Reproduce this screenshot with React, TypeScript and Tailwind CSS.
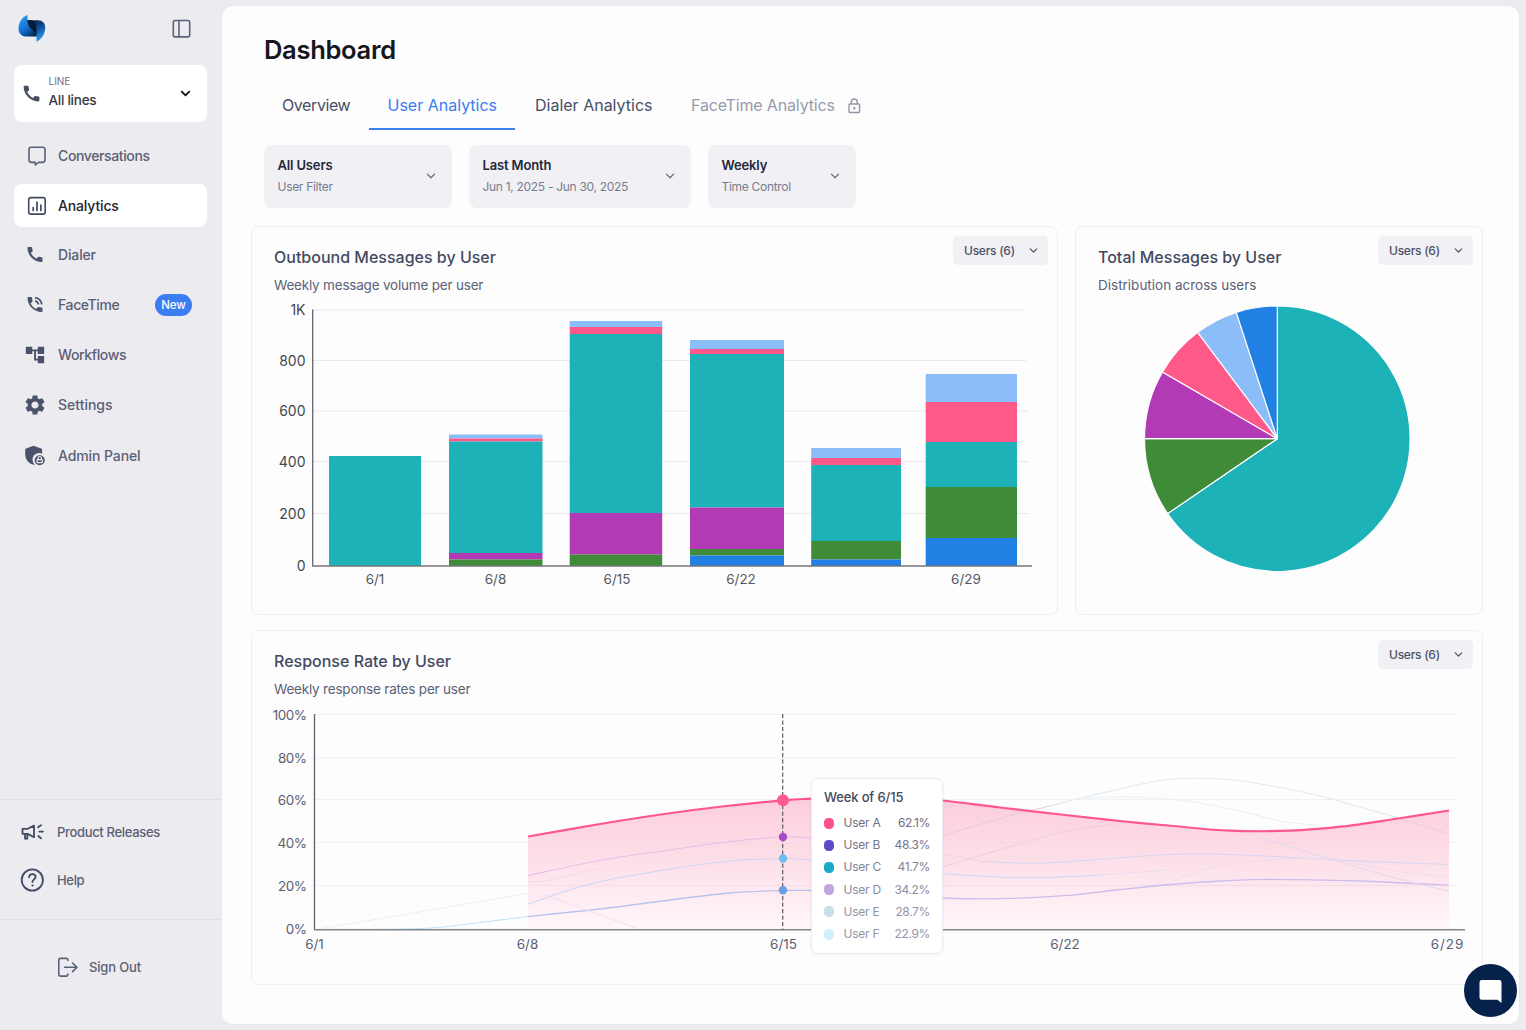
import React from 'react';
import { MdAccountTree, MdCall, MdPhoneInTalk, MdSettings } from 'react-icons/md';
import { ChevronDown } from 'lucide-react';

type Point = [number, number];

const COLORS = {
  teal: '#1cb2b8',
  green: '#3f8b37',
  purple: '#b33ab5',
  pink: '#ff5989',
  sky: '#8bbdf8',
  blue: '#2180e3',
};

// Each segment is [color, top edge]; it runs down to the next one or to the axis.
const BASELINE = 566;
const BARS: { x: number; w: number; label?: string; labelX?: number; segments: [string, number][] }[] = [
  { x: 329, w: 92, label: '6/1', labelX: 375, segments: [[COLORS.teal, 456]] },
  {
    x: 449, w: 93.5, label: '6/8', labelX: 495.5,
    segments: [[COLORS.sky, 434.5], [COLORS.pink, 438.5], [COLORS.teal, 441.5], [COLORS.purple, 553], [COLORS.green, 559.5]],
  },
  {
    x: 569.7, w: 92.5, label: '6/15', labelX: 617,
    segments: [[COLORS.sky, 321], [COLORS.pink, 327], [COLORS.teal, 334], [COLORS.purple, 513], [COLORS.green, 554.5]],
  },
  {
    x: 690, w: 94, label: '6/22', labelX: 741,
    segments: [[COLORS.sky, 340], [COLORS.pink, 349], [COLORS.teal, 354], [COLORS.purple, 507.5], [COLORS.green, 549], [COLORS.blue, 555.5]],
  },
  {
    x: 811.2, w: 89.8,
    segments: [[COLORS.sky, 448], [COLORS.pink, 458], [COLORS.teal, 465], [COLORS.green, 541], [COLORS.blue, 559.5]],
  },
  {
    x: 925.7, w: 91.3, label: '6/29', labelX: 966,
    segments: [[COLORS.sky, 374], [COLORS.pink, 402], [COLORS.teal, 442], [COLORS.green, 487], [COLORS.blue, 538]],
  },
];

const BAR_TICKS: [string, number, number][] = [
  ['1K', 310, 1024],
  ['800', 360.5, 1026],
  ['600', 411, 1028],
  ['400', 461.5, 1028],
  ['200', 513.5, 1029],
];

const SLICES: [string, number, number][] = [
  [COLORS.teal, 0, 235.66],
  [COLORS.green, 235.66, 270],
  [COLORS.purple, 270, 300.2],
  [COLORS.pink, 300.2, 323.2],
  [COLORS.sky, 323.2, 342],
  [COLORS.blue, 342, 360],
];

const RATE_TICKS: [string, number][] = [
  ['100%', 714.5],
  ['80%', 758],
  ['60%', 799.5],
  ['40%', 842.5],
  ['20%', 885.5],
  ['0%', 929],
];

const USER_A: Point[] = [[528, 836.5], [600, 824], [661, 814.5], [722, 806.5], [783, 800.3], [811, 798.7], [860, 797], [905, 797.5], [942, 800.5], [1000, 807.5], [1065, 815], [1120, 821], [1173, 826], [1230, 830.7], [1290, 830.7], [1341, 826.7], [1395, 819], [1449, 810.5]];

const RATE_LINES: { color: string; width?: number; points: Point[] }[] = [
  { color: '#e9f1ec', points: [[322, 928.5], [528, 893.5]] },
  { color: '#e8bfe6', points: [[528, 875.5], [602, 860], [670, 850], [730, 841.5], [783, 837], [811, 838], [870, 843]] },
  { color: '#cdd7f2', points: [[528, 904], [590, 884], [670, 869], [730, 861], [783, 858.5], [811, 860], [870, 867], [942, 873.7], [1025, 877.7], [1100, 875]] },
  { color: '#e8dcef', points: [[1100, 875], [1170, 870]] },
  { color: '#bfe6f4', points: [[370, 929.5], [430, 928], [480, 922.5], [528, 916.5]] },
  { color: '#b9c3ee', width: 1.3, points: [[528, 916.5], [600, 909], [670, 900], [730, 893], [783, 890.5], [811, 890.5]] },
  { color: '#cdbdec', width: 1.3, points: [[811, 890.5], [870, 893.5], [942, 898], [1000, 898.7], [1065, 895.6], [1120, 889.5], [1170, 884.5], [1220, 881], [1270, 879.3], [1360, 881], [1449, 885.3]] },
  { color: '#dfecea', points: [[1050, 806], [1100, 793.5], [1168, 779.5], [1228, 779.5], [1280, 787.5], [1320, 796], [1395, 817]] },
  { color: '#e8cbd8', points: [[942, 836], [1000, 818.5], [1050, 806]] },
  { color: '#e6cfd9', points: [[1395, 817], [1449, 834]] },
  { color: '#ead2dc', points: [[942, 867], [1040, 838], [1080, 829], [1115, 824]] },
  { color: '#e4f1f8', points: [[1085, 798], [1125, 797], [1180, 800], [1240, 811], [1280, 821], [1320, 825.5]] },
  { color: '#e2d9ee', points: [[1250, 834], [1320, 856], [1395, 878], [1449, 891]] },
  { color: '#f0d3e4', points: [[942, 853.5], [980, 861]] },
  { color: '#d6d6f0', points: [[980, 861], [1025, 863.3], [1065, 862], [1168, 854.5], [1230, 854.5], [1320, 859], [1380, 862], [1449, 864.5]] },
  { color: '#efdcec', points: [[1172, 881], [1210, 868], [1250, 861.5], [1320, 859], [1395, 871], [1449, 877]] },
  { color: '#f8d8e5', points: [[528, 882], [550, 880], [600, 868]] },
  { color: '#f2e0ef', points: [[545, 895], [600, 915], [636, 928]] },
];

const TOOLTIP_ROWS = [
  { name: 'User A', value: '62.1%', dot: 'bg-[#fd5188]', text: 'text-[#6d7085]' },
  { name: 'User B', value: '48.3%', dot: 'bg-[#5b4bc4]', text: 'text-[#73768a]' },
  { name: 'User C', value: '41.7%', dot: 'bg-[#1ba9c9]', text: 'text-[#818497]' },
  { name: 'User D', value: '34.2%', dot: 'bg-[#c0a5e2]', text: 'text-[#8a8d9f]' },
  { name: 'User E', value: '28.7%', dot: 'bg-[#c8dfea]', text: 'text-[#9295a6]' },
  { name: 'User F', value: '22.9%', dot: 'bg-[#d0effd]', text: 'text-[#9295a6]' },
];

const smooth = (pts: Point[]) => {
  let d = `M${pts[0][0]} ${pts[0][1]}`;
  for (let i = 0; i < pts.length - 1; i++) {
    const p0 = pts[i - 1] ?? pts[i];
    const p1 = pts[i];
    const p2 = pts[i + 1];
    const p3 = pts[i + 2] ?? p2;
    d += ` C${p1[0] + (p2[0] - p0[0]) / 6} ${p1[1] + (p2[1] - p0[1]) / 6} ${p2[0] - (p3[0] - p1[0]) / 6} ${p2[1] - (p3[1] - p1[1]) / 6} ${p2[0]} ${p2[1]}`;
  }
  return d;
};

const slicePath = (start: number, end: number, cx: number, cy: number, r: number) => {
  const at = (deg: number) => {
    const a = ((deg - 90) * Math.PI) / 180;
    return `${cx + r * Math.cos(a)} ${cy + r * Math.sin(a)}`;
  };
  return `M${cx} ${cy} L${at(start)} A${r} ${r} 0 ${end - start > 180 ? 1 : 0} 1 ${at(end)} Z`;
};

const Logo = () => (
  <svg className="h-7 w-7" viewBox="0 0 28 28">
    <defs>
      <linearGradient id="logo-left" x1="0.1" y1="0" x2="0.75" y2="1">
        <stop offset="0" stopColor="#2e9df6" />
        <stop offset="0.5" stopColor="#1579d8" />
        <stop offset="0.8" stopColor="#0b4d98" />
        <stop offset="1" stopColor="#06264d" />
      </linearGradient>
      <linearGradient id="logo-right" x1="0.2" y1="0" x2="0.6" y2="1">
        <stop offset="0" stopColor="#06203f" />
        <stop offset="0.45" stopColor="#0d4f98" />
        <stop offset="1" stopColor="#2e9df8" />
      </linearGradient>
    </defs>
    <path d="M9 6.300h11c4.500 0 7.200 3 7.200 7.200 0 6-3.200 11.700-8.700 14.300v-6L9 12z" fill="url(#logo-right)" />
    <path d="M9.500 1v5.300c0 3.700 1.500 6.500 4 8.800l5 4.600v2.900H8.500C3.500 22.600.500 19 .500 15 .500 8.500 4 3 9.500 1z" fill="url(#logo-left)" />
    <path d="M9.500 6.300h4c3.500 1.500 5.500 5 5 13.400l-5-4.600c-2.500-2.300-4-5.100-4-8.800z" fill="#051a36" />
  </svg>
);

const PanelIcon = () => (
  <svg className="h-[19px] w-[19px]" viewBox="0 0 19 19" fill="none" stroke="#5c6378" strokeWidth="1.6">
    <rect x="1.300" y="1.500" width="16.400" height="16.400" rx="1.800" />
    <path d="M7 1.500v16.400" />
  </svg>
);

const ChatIcon = () => (
  <svg className="h-5 w-5" viewBox="0 0 20 20" fill="none" stroke="#5a6179" strokeWidth="1.6" strokeLinejoin="round">
    <path d="M4 1.200h12A2.100 2.100 0 0 1 18 3.300v10.500A2.600 2.600 0 0 1 15.400 16.400h-3.900L8.300 19v-2.600H4.600A2.600 2.600 0 0 1 2 13.800V3.300A2.100 2.100 0 0 1 4 1.200z" />
  </svg>
);

const ChartIcon = () => (
  <svg className="h-5 w-5" viewBox="0 0 20 20" fill="none" stroke="#404961" strokeWidth="1.6" strokeLinecap="round">
    <rect x="1.700" y="1.600" width="16.500" height="16.500" rx="2.200" />
    <path d="M6.200 11.700v2.800M10 6.200v8.300M13.900 9v5.500" strokeWidth="1.7" />
  </svg>
);

const AdminIcon = () => (
  <svg className="mr-1 h-6 w-6 shrink-0" viewBox="0 0 24 24" fill="#4b536a">
    <path d="M10.500 1.800 18.200 4.500c.6.200.9.600.9 1.200v4a6.600 6.600 0 0 0-7.400 10.800c-.4.200-.8.300-1.200.200C5 19.300 2.200 15 2.200 10V5.700c0-.6.300-1 .9-1.200z" />
    <circle cx="16.700" cy="16.200" r="5" />
    <g fill="none" stroke="#ebebf0" strokeWidth="1.200" strokeLinejoin="round">
      <path d="M15 15.300v-1.100a1.700 1.700 0 0 1 3.400 0v1.100" />
      <rect x="14.100" y="15.700" width="5.200" height="2.900" rx=".6" />
    </g>
  </svg>
);

const MegaphoneIcon = () => (
  <svg className="h-5 w-[25px]" viewBox="0 0 25 20" fill="none" stroke="#414a62" strokeWidth="1.800" strokeLinejoin="round" strokeLinecap="round">
    <path d="M2.500 6.800h5.200L14 3.600v11.600l-6.300-3.300H2.500z" />
    <path d="M5 12v4.700h2.300V12" />
    <path d="M18 5.200l3-1.900M19.300 9.600h3.700M18.300 14l2.800 2.400" />
  </svg>
);

const HelpIcon = () => (
  <svg className="h-6 w-6 shrink-0" viewBox="0 0 24 24" fill="none" stroke="#414a62" strokeWidth="1.8" strokeLinecap="round">
    <circle cx="12.300" cy="12" r="10.600" />
    <path d="M9.100 9.300c.1-1.900 1.400-3.100 3.300-3.100s3.200 1.100 3.200 2.800c0 2.300-3.200 2.500-3.200 5" />
    <circle cx="12.400" cy="17.500" r=".6" fill="#414a62" strokeWidth="1" />
  </svg>
);

const SignOutIcon = () => (
  <svg className="h-[21px] w-[21px]" viewBox="0 0 21 21" fill="none" stroke="#59607a" strokeWidth="1.600" strokeLinecap="round" strokeLinejoin="round">
    <path d="M10.800 3.500V2.700a1.300 1.300 0 0 0-1.300-1.300H3.300a1.500 1.500 0 0 0-1.500 1.500v14.700A1.500 1.500 0 0 0 3.300 19.100h6.200a1.300 1.300 0 0 0 1.300-1.300V17" />
    <path d="M7.500 10.300h12.300M15.600 6l4.300 4.300-4.300 4.300" />
  </svg>
);

const LockIcon = () => (
  <svg className="h-4 w-3.5" viewBox="0 0 14 16" fill="none" stroke="#9296a8" strokeWidth="1.400">
    <rect x="2" y="6" width="10.600" height="8.500" rx="1" />
    <path d="M4.300 6V4a3 3 0 0 1 6 0v2" />
    <circle cx="7.300" cy="10.300" r=".5" fill="#9296a8" />
  </svg>
);

interface NavItemProps {
  icon: React.ReactNode;
  label: string;
  active?: boolean;
  badge?: string;
  className?: string;
}

const NavItem: React.FC<NavItemProps> = ({ icon, label, active, badge, className = 'tracking-[-0.38px]' }) => (
  <a className={`flex h-[43px] items-center rounded-lg pl-[11px] pr-[15px] ${active ? 'bg-white text-[#22252f]' : 'text-[#5b6074]'} ${className}`}>
    <span className="flex w-6 justify-center text-[#4b536a]">{icon}</span>
    <span className="ml-[9px] flex-1 whitespace-nowrap text-[14px] font-medium leading-5">{label}</span>
    {badge && <span className="rounded-full bg-[#3c7df2] px-[6.500px] text-[11.500px] font-medium leading-[22px] tracking-[-0.2px] text-white">{badge}</span>}
  </a>
);

const Sidebar = () => (
  <aside className="flex w-[221px] shrink-0 flex-col">
    <div className="flex h-[65px] items-start justify-between pl-[18px] pr-[30px] pt-[14px]">
      <Logo />
      <span className="pt-[5px]"><PanelIcon /></span>
    </div>
    <button className="mx-[14px] flex h-[57px] w-[193px] items-center rounded-lg bg-white pl-[7px] pr-[14px] text-left">
      <MdCall className="h-[21px] w-[21px] text-[#474d61]" />
      <span className="ml-[6.500px] flex-1 pb-1">
        <span className="block text-[10px] leading-[17px] text-[#6c7184]">LINE</span>
        <span className="block text-[13.500px] font-medium leading-[20px] tracking-[-0.25px] text-[#353945]">All lines</span>
      </span>
      <ChevronDown className="h-[15px] w-[15px] text-[#14161d]" strokeWidth={3} />
    </button>
    <nav className="mt-3 flex flex-col gap-[7px] px-[14px]">
      <NavItem icon={<ChatIcon />} label="Conversations" />
      <NavItem icon={<ChartIcon />} label="Analytics" className="tracking-[-0.15px]" active />
      <NavItem icon={<MdCall className="mr-1 h-[21px] w-[21px]" />} label="Dialer" className="-mt-px tracking-[-0.15px]" />
      <NavItem icon={<MdPhoneInTalk className="mr-1 h-[21px] w-[21px]" />} label="FaceTime" badge="New" />
      <NavItem icon={<MdAccountTree className="mr-1 h-[22px] w-[22px] shrink-0" />} label="Workflows" />
      <NavItem icon={<MdSettings className="mr-1 h-[24px] w-[24px] shrink-0" />} label="Settings" className="" />
      <NavItem icon={<AdminIcon />} label="Admin Panel" className="mt-[1.500px] tracking-[-0.1px]" />
    </nav>
    <div className="mt-auto h-[120px] border-t border-[#dfe0e6] pl-5 pt-[18px] text-[13px] font-medium tracking-[-0.33px] text-[#5b6074]">
      <div className="flex h-7 items-center">
        <span className="flex w-[37px]"><MegaphoneIcon /></span>
        <span className="pt-px">Product Releases</span>
      </div>
      <div className="mt-5 flex h-7 items-center">
        <span className="flex w-[37px]"><HelpIcon /></span>
        <span className="pt-px">Help</span>
      </div>
    </div>
    <div className="flex h-[111px] items-start border-t border-[#dfe0e6] pl-[57px] pt-[37px] text-[#5b6074]">
      <SignOutIcon />
      <span className="ml-[11px] text-[13px] font-medium leading-[21px] tracking-[-0.15px]">Sign Out</span>
    </div>
  </aside>
);

const FilterSelect: React.FC<{ title: string; detail: string; width: string }> = ({ title, detail, width }) => (
  <button className={`flex h-[63px] items-center justify-between rounded-lg bg-[#f1f1f5] pl-[13.500px] pr-[14px] text-left ${width}`}>
    <span className="whitespace-nowrap pb-[2px]">
      <span className="block text-[13px] font-semibold leading-[21px] tracking-[-0.15px] text-[#23273a]">{title}</span>
      <span className="block text-[12px] leading-[21px] tracking-[-0.3px] text-[#777b8d]">{detail}</span>
    </span>
    <ChevronDown className="mb-px h-[14px] w-[14px] text-[#6b7083]" strokeWidth={2.2} />
  </button>
);

const UsersButton = () => (
  <button className="flex h-[29px] w-[95px] items-center justify-between rounded-[5px] bg-[#f0f0f5] pl-[11px] pr-2 text-[12px] font-medium tracking-[-0.25px] text-[#4c5266]">
    Users (6)
    <ChevronDown className="h-[13px] w-[13px]" strokeWidth={2.2} />
  </button>
);

interface CardProps {
  title: string;
  subtitle: string;
  className: string;
  subtitleClass?: string;
  children: React.ReactNode;
}

const Card: React.FC<CardProps> = ({ title, subtitle, className, subtitleClass = 'tracking-[-0.2px]', children }) => (
  <section className={`rounded-lg border border-[#efeff3] ${className}`}>
    <div className="flex h-[69px] justify-between pl-[22px] pr-[9px]">
      <div className="pt-[18px]">
        <h2 className="text-[16px] font-medium leading-6 text-[#434a60]">{title}</h2>
        <p className={`mt-[6px] text-[13.500px] leading-5 text-[#5b6177] ${subtitleClass}`}>{subtitle}</p>
      </div>
      <div className="pt-[9px]"><UsersButton /></div>
    </div>
    {children}
  </section>
);

const BarChart = () => (
  <svg className="block h-[318px] w-full" viewBox="252 296 805 318">
    {BAR_TICKS.map(([label, y, end]) => (
      <g key={label}>
        <path d={`M313 ${y}H${end}`} stroke="#e9e9ec" />
        <text x="305.500" y={y + 5} textAnchor="end" fontSize="14" fill="#43464f">{label}</text>
      </g>
    ))}
    <text x="305.500" y="571" textAnchor="end" fontSize="14" fill="#43464f">0</text>
    {BARS.map((bar) => (
      <g key={bar.x}>
        {bar.segments.map(([color, top], i) => {
          const bottom = bar.segments[i + 1]?.[1] ?? BASELINE;
          return <rect key={color} x={bar.x} y={top} width={bar.w} height={bottom - top} fill={color} />;
        })}
        {bar.label && <text x={bar.labelX} y="584" textAnchor="middle" fontSize="13.500" fill="#555860">{bar.label}</text>}
      </g>
    ))}
    <path d="M312.700 309.500V566" stroke="#63656d" strokeWidth="1.300" />
    <path d="M312 566H1032" stroke="#74757a" strokeWidth="1.400" />
  </svg>
);

const PieChart = () => (
  <svg className="block h-[318px] w-full" viewBox="1076 296 406 318">
    {SLICES.map(([color, start, end]) => (
      <path key={color} d={slicePath(start, end, 1277.300, 438.700, 132.800)} fill={color} stroke="#fdfdfe" strokeWidth="1.200" strokeLinejoin="round" />
    ))}
  </svg>
);

const RateTooltip = () => (
  <div className="absolute left-[559px] top-[78px] h-[176px] w-[132px] rounded-[7px] border border-[#ebebf1] bg-white px-3 pt-2 shadow-[0_1px_3px_rgba(40,40,80,0.06)]">
    <p className="text-[13px] font-medium leading-5 tracking-[-0.15px] text-[#434a60]">Week of 6/15</p>
    <ul className="mt-[5px]">
      {TOOLTIP_ROWS.map((row) => (
        <li key={row.name} className={`flex h-[22.200px] items-center text-[12px] tracking-[-0.25px] ${row.text}`}>
          <span className={`h-[11px] w-[10px] rounded-[4.500px] ${row.dot}`} />
          <span className="ml-[9.500px] flex-1">{row.name}</span>
          <span className="tracking-[-0.35px]">{row.value}</span>
        </li>
      ))}
    </ul>
  </div>
);

const RateChart = () => (
  <div className="relative">
    <svg className="block h-[284px] w-full" viewBox="252 700 1230 284">
      <defs>
        <linearGradient id="rate-fill" gradientUnits="userSpaceOnUse" x1="0" y1="797" x2="0" y2="929">
          <stop offset="0" stopColor="#fccddc" />
          <stop offset="0.5" stopColor="#fde0e9" />
          <stop offset="1" stopColor="#fff7fa" />
        </linearGradient>
      </defs>
      {RATE_TICKS.map(([label, y]) => (
        <g key={label}>
          <path d={`M315 ${y}H1457`} stroke="#f2f2f4" />
          <text x="306.500" y={y + 5.300} textAnchor="end" fontSize="13.500" letterSpacing="-0.500" fill="#5c6072">{label}</text>
        </g>
      ))}
      <path d={`${smooth(USER_A)} V929 H528 Z`} fill="url(#rate-fill)" />
      {RATE_TICKS.slice(3, 5).map(([label, y]) => (
        <path key={label} d={`M528 ${y}H1449`} stroke="#f3d3de" strokeOpacity="0.6" />
      ))}
      {RATE_LINES.map((line, i) => (
        <path key={i} d={smooth(line.points)} fill="none" stroke={line.color} strokeWidth={line.width ?? 1.1} />
      ))}
      <path d={smooth(USER_A)} fill="none" stroke="#fd5690" strokeWidth="2.200" />
      <path d="M314.500 714V929.500" stroke="#5f616a" strokeWidth="1.300" />
      <path d="M314 929.700H1465" stroke="#84868a" strokeWidth="1.500" />
      <path d="M782.700 714V930" stroke="#5c5c66" strokeWidth="1.200" strokeDasharray="4.200 2.300" />
      <circle cx="783" cy="800.300" r="6" fill="#fd5a90" />
      <circle cx="783" cy="837" r="4.200" fill="#a94bc8" />
      <circle cx="783" cy="858.500" r="4.200" fill="#6dbdf0" />
      <circle cx="783" cy="890.300" r="4.200" fill="#6a9fe6" />
      <g fontSize="13.500" fill="#5c6072" textAnchor="middle">
        <text x="314.500" y="949">6/1</text>
        <text x="527.500" y="949">6/8</text>
        <text x="783.500" y="949">6/15</text>
        <text x="1065" y="949">6/22</text>
        <text x="1447.500" y="949" letterSpacing="0.900">6/29</text>
      </g>
    </svg>
    <RateTooltip />
  </div>
);

const App: React.FC = () => (
  <div className="flex h-[1030px] w-[1526px] overflow-hidden bg-[#ebebf0] font-['Inter','Liberation_Sans',sans-serif]">
    <Sidebar />
    <main className="mb-[6px] ml-px mt-[6px] w-[1297px] rounded-[10px] bg-[#fdfdfe] pl-[29px] pr-[35px] shadow-[0_0_2px_rgba(60,60,90,0.08)]">
      <h1 className="ml-[13px] pt-[26px] text-[25.500px] font-semibold leading-9 tracking-[-0.3px] text-[#15171c]">Dashboard</h1>
      <div className="ml-[13px] mt-[19px] flex h-[43px] text-[16px] leading-[37px] text-[#484f64]">
        <span className="w-[105px] pl-[18px] tracking-[-0.4px]">Overview</span>
        <span className="w-[146px] border-b-2 border-[#3f7ff3] pl-[18.500px] text-[#3b7cf0]">User Analytics</span>
        <span className="w-[157px] pl-[20px]">Dialer Analytics</span>
        <span className="flex items-center gap-3 pb-[6px] pl-[19px] tracking-[-0.16px] text-[#979bab]">
          FaceTime Analytics
          <LockIcon />
        </span>
      </div>
      <div className="ml-[13px] mt-[15px] flex gap-[17px]">
        <FilterSelect title="All Users" detail="User Filter" width="w-[188px]" />
        <FilterSelect title="Last Month" detail="Jun 1, 2025 - Jun 30, 2025" width="w-[222px]" />
        <FilterSelect title="Weekly" detail="Time Control" width="w-[148px]" />
      </div>
      <div className="mt-[18px] flex gap-[17px]">
        <Card title="Outbound Messages by User" subtitle="Weekly message volume per user" className="h-[389px] w-[807px] shrink-0">
          <BarChart />
        </Card>
        <Card title="Total Messages by User" subtitle="Distribution across users" subtitleClass="" className="h-[389px] w-[408px] shrink-0">
          <PieChart />
        </Card>
      </div>
      <Card title="Response Rate by User" subtitle="Weekly response rates per user" className="mt-[15px] h-[355px] w-[1232px]">
        <RateChart />
      </Card>
    </main>
    <button className="absolute left-[1464px] top-[964px] flex h-[53px] w-[53px] items-center justify-center rounded-full bg-[#06214a]">
      <svg className="h-6 w-6" viewBox="0 0 24 24" fill="#fff">
        <path d="M2.700 1h17.600A2.200 2.200 0 0 1 22.500 3.200V24l-4-3.300H2.700A2.200 2.200 0 0 1 .500 18.500V3.200A2.200 2.200 0 0 1 2.700 1z" />
      </svg>
    </button>
  </div>
);

export default App;
